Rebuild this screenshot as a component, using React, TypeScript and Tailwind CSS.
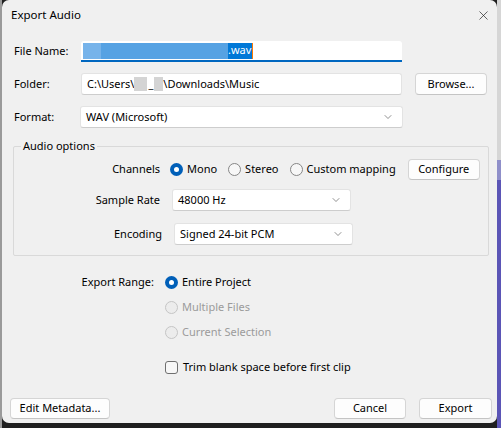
import { ChevronDown, X } from 'lucide-react';

const font = { fontFamily: '"Noto Sans", "Open Sans", Arial, sans-serif' };

function Radio({ checked = false, disabled = false, className = '' }: { checked?: boolean; disabled?: boolean; className?: string }) {
  if (checked) {
    return (
      <span className={`flex h-[13px] w-[13px] shrink-0 items-center justify-center rounded-full bg-[#005fb8] ${className}`}>
        <span className="h-[5px] w-[5px] rounded-full bg-white" />
      </span>
    );
  }
  return (
    <span
      className={`block h-[13px] w-[13px] shrink-0 rounded-full border ${
        disabled ? 'border-[#c5c5c5] bg-[#ececec]' : 'border-[#868686] bg-[#f7f7f7]'
      } ${className}`}
    />
  );
}

function Button({ children, className = '' }: { children: React.ReactNode; className?: string }) {
  return (
    <div
      className={`flex items-center justify-center rounded-[4px] border border-[#d5d5d5] border-b-[#c4c4c4] bg-[#fdfdfd] text-[11px] text-black ${className}`}
    >
      {children}
    </div>
  );
}

function Select({ value, className = '' }: { value: string; className?: string }) {
  return (
    <div
      className={`flex items-center justify-between rounded-[3px] border border-[#e3e3e3] border-b-[#cdcdcd] bg-white pl-[5px] pr-[8px] text-[11px] text-black ${className}`}
    >
      <span>{value}</span>
      <ChevronDown size={12} strokeWidth={1.3} className="text-[#555]" />
    </div>
  );
}

export default function App() {
  return (
    <div className="flex h-[428px] w-[501px] bg-[#1f1f1f] text-[11px] text-black" style={font}>
      <div className="w-[2px] bg-[#9a9a9a]" />
      <div className="flex h-[423px] w-[495px] flex-col rounded-[7px] bg-[#f0f0f0]">
        {/* title bar */}
        <div className="flex h-[30px] items-center justify-between pl-[9px] pr-[6px]">
          <span className="text-[11.5px]">Export Audio</span>
          <X size={15} strokeWidth={1.1} className="text-[#222]" />
        </div>

        {/* file name */}
        <div className="mt-[11px] flex items-center pl-[12px]">
          <span className="w-[67px]">File Name:</span>
          <div className="flex h-[21px] w-[321px] items-center rounded-t-[3px] border-b-2 border-[#0067c0] bg-white pl-[2px]">
            <span className="h-[16px] w-[18px] bg-[#76b3ea]" />
            <span className="h-[16px] w-[127px] bg-[#56a2e3]" />
            <span className="flex h-[16px] items-center bg-[#0078d7] pr-[1px] text-white">.wav</span>
            <span className="h-[16px] w-[1px] bg-[#ff7a00]" />
          </div>
        </div>

        {/* folder */}
        <div className="mt-[11px] flex items-center pl-[12px]">
          <span className="w-[67px]">Folder:</span>
          <div className="flex h-[22px] w-[321px] items-center rounded-[3px] border border-[#e3e3e3] border-b-[#cdcdcd] bg-white pl-[5px]">
            <span>C:\Users\</span>
            <span className="h-[14px] w-[13px] bg-[#d4d4d4]" />
            <span className="px-[1px]">_</span>
            <span className="h-[14px] w-[9px] bg-[#d4d4d4]" />
            <span>\Downloads\Music</span>
          </div>
          <Button className="ml-[13px] h-[22px] w-[72px]">Browse...</Button>
        </div>

        {/* format */}
        <div className="mt-[11px] flex items-center pl-[12px]">
          <span className="w-[66px]">Format:</span>
          <Select value="WAV (Microsoft)" className="h-[22px] w-[323px]" />
        </div>

        {/* audio options group */}
        <div className="relative ml-[11px] mt-[18px] h-[110px] w-[476px] rounded-[2px] border border-[#d9d9d9]">
          <span className="absolute -top-[9px] left-[7px] bg-[#f0f0f0] px-[2px]">Audio options</span>

          <div className="mt-[12px] flex items-center">
            <span className="w-[148px] pr-[2px] text-right">Channels</span>
            <Radio checked className="ml-[8px]" />
            <span className="ml-[4px]">Mono</span>
            <Radio className="ml-[11px]" />
            <span className="ml-[4px]">Stereo</span>
            <Radio className="ml-[11px]" />
            <span className="ml-[4px]">Custom mapping</span>
            <Button className="ml-[12px] h-[21px] w-[72px]">Configure</Button>
          </div>

          <div className="mt-[9px] flex items-center">
            <span className="w-[148px] pr-[2px] text-right">Sample Rate</span>
            <Select value="48000 Hz" className="ml-[10px] h-[22px] w-[179px]" />
          </div>

          <div className="mt-[12px] flex items-center">
            <span className="w-[150px] pr-[2px] text-right">Encoding</span>
            <Select value="Signed 24-bit PCM" className="ml-[10px] h-[22px] w-[179px]" />
          </div>
        </div>

        {/* export range */}
        <div className="mt-[18px] flex">
          <span className="w-[154px] pr-[2px] text-right">Export Range:</span>
          <div className="ml-[9px] flex flex-col gap-[8px]">
            <div className="flex h-[17px] items-center gap-[4px]">
              <Radio checked />
              <span>Entire Project</span>
            </div>
            <div className="flex h-[17px] items-center gap-[4px] text-[#9b9b9b]">
              <Radio disabled />
              <span>Multiple Files</span>
            </div>
            <div className="flex h-[17px] items-center gap-[4px] text-[#9b9b9b]">
              <Radio disabled />
              <span>Current Selection</span>
            </div>
          </div>
        </div>

        <div className="ml-[163px] mt-[18px] flex h-[17px] items-center gap-[5px]">
          <span className="h-[13px] w-[13px] rounded-[3px] border border-[#6f6f6f] bg-[#f7f7f7]" />
          <span>Trim blank space before first clip</span>
        </div>

        {/* bottom buttons */}
        <div className="mt-auto mb-[4px] flex items-center pl-[8px] pr-[5px]">
          <Button className="h-[21px] w-[100px]">Edit Metadata...</Button>
          <Button className="ml-auto h-[21px] w-[72px]">Cancel</Button>
          <Button className="ml-[13px] h-[21px] w-[73px]">Export</Button>
        </div>
      </div>
      <div className="flex w-[4px] flex-col">
        <div className="h-[160px] bg-[#d6d6d6]" />
        <div className="h-[20px] bg-[#8f8fc9]" />
        <div className="flex-1 bg-[#5b55b6]" />
      </div>
    </div>
  );
}
